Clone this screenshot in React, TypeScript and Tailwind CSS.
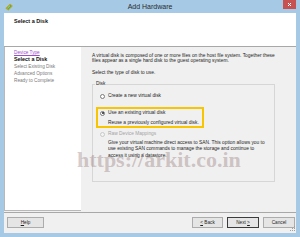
import React from "react";

const Radio = ({ checked, disabled }: { checked?: boolean; disabled?: boolean }) => (
  <span
    className={
      disabled
        ? "flex h-[5px] w-[5px] shrink-0 items-center justify-center rounded-full border border-[#c8c8c8] bg-[#f4f4f4]"
        : "flex h-[5px] w-[5px] shrink-0 items-center justify-center rounded-full border border-[#7a7a7a] bg-white"
    }
  >
    {checked && <span className="h-[2px] w-[2px] rounded-full bg-[#222]" />}
  </span>
);

const Btn = ({ children, focused, w }: { children: React.ReactNode; focused?: boolean; w: string }) => (
  <div
    className={
      (focused
        ? "border-[#3c3c3c] "
        : "border-[#acacac] ") +
      w +
      " flex h-[11px] items-center justify-center border bg-[#e5e5e5] text-[4.7px] leading-[5px] text-[#1e1e1e]"
    }
  >
    {children}
  </div>
);

export default function App() {
  return (
    <div className="relative flex h-[237px] w-[300px] flex-col overflow-hidden bg-[#a6cae6] font-['Liberation_Sans',Arial,sans-serif] text-[#1e1e1e]">
      {/* Title bar */}
      <div className="grid h-[13px] grid-cols-[1fr_auto_1fr] items-start">
        <div className="pl-[5px] pt-[3px]">
          <svg width="8" height="8" viewBox="0 0 8 8">
            <path d="M0.8 5.2 L5 1 L7.4 3 L3.2 7.2 Z" fill="#5fae4b" stroke="#d9a21f" strokeWidth="0.9" />
            <path d="M2.4 5.2 L5 2.6" stroke="#e8f2c0" strokeWidth="0.6" />
          </svg>
        </div>
        <div className="whitespace-nowrap text-[7px] leading-[13px] text-[#2b2b2b]">Add Hardware</div>
        <div className="flex justify-end pr-[4px]">
          <div className="flex h-[9px] w-[13px] items-center justify-center bg-[#c75050]">
            <svg width="5" height="5" viewBox="0 0 5 5">
              <path d="M1 1 L4 4 M4 1 L1 4" stroke="#ffffff" strokeWidth="1" />
            </svg>
          </div>
        </div>
      </div>

      {/* Window body */}
      <div className="mx-[4px] flex h-[220px] flex-col bg-[#f0f0f0]">
        {/* Header */}
        <div className="h-[34px] border-b border-[#a8a8a8] bg-white pl-[10px] pt-[4.5px]">
          <div className="text-[5.5px] font-bold leading-[7px] text-[#111]">Select a Disk</div>
        </div>

        {/* Main */}
        <div className="flex h-[165px]">
          <div className="h-[164px] w-[77px] shrink-0 border-l border-b border-[#b8b8b8] bg-white pl-[9px] pt-[1.5px] text-[4.7px] leading-[7px]">
            <div className="text-[#9b4dca] underline">Device Type</div>
            <div className="text-[5.4px] font-bold text-[#111]">Select a Disk</div>
            <div className="text-[#7a7a7a]">Select Existing Disk</div>
            <div className="text-[#7a7a7a]">Advanced Options</div>
            <div className="text-[#7a7a7a]">Ready to Complete</div>
          </div>

          <div className="flex flex-1 flex-col pl-[11px] pt-[6px] text-[4.85px] text-[#1e1e1e]">
            <div className="whitespace-nowrap leading-[5px]">
              <div>A virtual disk is composed of one or more files on the host file system. Together these</div>
              <div>files appear as a single hard disk to the guest operating system.</div>
            </div>
            <div className="mt-[7px] whitespace-nowrap leading-[6px]">Select the type of disk to use.</div>

            <div className="relative mt-[8px] h-[98px] w-[183px] border border-[#d6d6d6]">
              <span className="absolute -top-[4px] left-[2px] bg-[#f0f0f0] px-[1px] leading-[6px]">Disk</span>

              <div className="flex items-center gap-[3px] pl-[7px] pt-[8px] leading-[6px]">
                <Radio />
                <span className="whitespace-nowrap">Create a new virtual disk</span>
              </div>

              <div className="mt-[11px] flex items-center gap-[3px] pl-[7px] leading-[6px]">
                <Radio checked />
                <span className="whitespace-nowrap">Use an existing virtual disk</span>
              </div>
              <div className="mt-[4px] whitespace-nowrap pl-[15px] leading-[6px]">Reuse a previously configured virtual disk.</div>

              <div className="mt-[5px] flex items-center gap-[3px] pl-[7px] leading-[6px]">
                <Radio disabled />
                <span className="whitespace-nowrap text-[#a3a3a3]">Raw Device Mappings</span>
              </div>
              <div className="mt-[3px] whitespace-nowrap pl-[15px] leading-[6.3px]">
                <div>Give your virtual machine direct access to SAN. This option allows you to</div>
                <div>use existing SAN commands to manage the storage and continue to</div>
                <div>access it using a datastore.</div>
              </div>

              {/* annotation highlight */}
              <div className="pointer-events-none absolute left-[3px] top-[22px] h-[21px] w-[108px] border-2 border-[#f7c600]" />
            </div>
          </div>
        </div>

        {/* Footer */}
        <div className="relative flex h-[21px] border-t border-[#a8a8a8] pl-[3px] pr-[1px] pt-[4px]">
          <Btn w="w-[37px]">
            <span>
              <span className="underline">H</span>elp
            </span>
          </Btn>
          <div className="flex-1" />
          <div className="flex gap-[4px]">
            <Btn w="w-[31px]">
              <span className="whitespace-nowrap">
                <span className="underline">&lt;</span> Back
              </span>
            </Btn>
            <Btn w="w-[32px]" focused>
              <span className="whitespace-nowrap">
                Next <span className="underline">&gt;</span>
              </span>
            </Btn>
            <Btn w="w-[32px]">Cancel</Btn>
          </div>
          <svg className="absolute bottom-[1px] right-0" width="7" height="7" viewBox="0 0 7 7">
            <rect x="5" y="1" width="1" height="1" fill="#a0a0a0" />
            <rect x="3" y="3" width="1" height="1" fill="#a0a0a0" />
            <rect x="5" y="3" width="1" height="1" fill="#a0a0a0" />
            <rect x="1" y="5" width="1" height="1" fill="#a0a0a0" />
            <rect x="3" y="5" width="1" height="1" fill="#a0a0a0" />
            <rect x="5" y="5" width="1" height="1" fill="#a0a0a0" />
          </svg>
        </div>
      </div>

      {/* watermark */}
      <div className="pointer-events-none absolute left-[77px] top-[148.5px] whitespace-nowrap font-['Liberation_Serif',serif] text-[22px] font-bold leading-[22px] text-[rgba(150,120,120,0.4)]">
        https://arkit.co.in
      </div>
    </div>
  );
}
